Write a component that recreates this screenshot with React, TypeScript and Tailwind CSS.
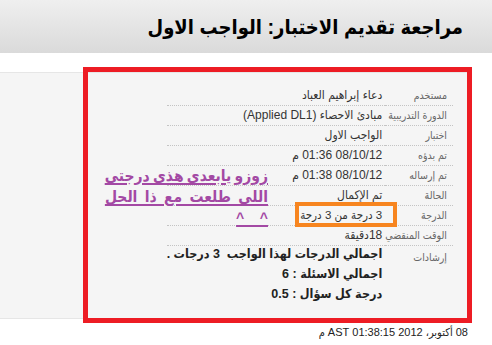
import React from "react";

const rows: [string, React.ReactNode][] = [
  ["مستخدم", "دعاء إبراهيم العباد"],
  ["الدورة التدريبية", "مبادئ الاحصاء (Applied DL1)"],
  ["اختبار", "الواجب الاول"],
  ["تم بدؤه", "08/10/12 01:36 م"],
  ["تم إرساله", "08/10/12 01:38 م"],
  ["الحالة", "تم الإكمال"],
  ["الدرجة", <span className="text-[11.5px]">3 درجة من 3 درجة</span>],
  ["الوقت المنقضي", "18دقيقة"],
];

export default function App() {
  const font = { fontFamily: '"Liberation Sans", "DejaVu Sans Condensed", "DejaVu Sans", sans-serif' };
  return (
    <div className="w-[492px] h-[345px] bg-white relative overflow-hidden" style={font}>
      <div className="h-[53px] bg-gradient-to-b from-[#efefef] to-[#dadada] flex items-center justify-end pr-[29px]">
        <h1 dir="rtl" className="text-[20px] font-bold text-black">مراجعة تقديم الاختبار: الواجب الاول</h1>
      </div>
      <div className="mt-[19px] w-[470px] h-[247px] bg-[#f5f5f5] border-y border-[#e6e6e6] flex justify-end pt-[12px] pr-[17px]">
        <table dir="rtl" className="w-[278px] h-fit border-collapse text-[#333]">
          <tbody>
            {rows.map(([k, v], i) => (
              <tr key={i} className="h-[20px] border-b border-dotted border-[#c4c4c4] leading-[16px]">
                <td className="w-[65px] p-0 pr-[6px] text-[10.5px] text-[#666] whitespace-nowrap align-middle">{k}</td>
                <td className="p-0 pr-[3px] text-[12px] whitespace-nowrap align-middle">{v}</td>
              </tr>
            ))}
            <tr>
              <td className="w-[65px] pr-[6px] pt-[4px] text-[10.5px] text-[#666] align-top whitespace-nowrap">إرشادات</td>
              <td className="pr-[3px] pt-0 text-[12.5px] font-bold text-[#222] leading-[20px] whitespace-nowrap align-top">
                <div className="-mt-[2px]">اجمالي الدرجات لهذا الواجب&nbsp; 3 درجات .</div>
                <div>اجمالي الاسئلة : 6</div>
                <div>درجة كل سؤال : 0.5</div>
              </td>
            </tr>
          </tbody>
        </table>
      </div>
      <div dir="rtl" className="pr-[24px] pt-[5px] text-[11px] text-[#222]">08 أكتوبر، 2012 01:38:15 AST م</div>

      {/* red highlight frame */}
      <div className="absolute left-[83px] top-[67px] w-[389px] h-[256px] border-[5px] border-[#ed1c24]" />
      {/* orange highlight on grade */}
      <div className="absolute left-[295px] top-[202px] w-[102px] h-[25px] border-[4px] border-[#f7851f]" />
      {/* purple note */}
      <div dir="rtl" className="absolute left-[100px] top-[165px] w-[168px] text-[15.5px] font-bold text-[#a349a4] leading-[21px] whitespace-nowrap underline decoration-2 underline-offset-2">
        <div className="[word-spacing:-1px]">زوزو يابعدى هذى درجتى</div>
        <div className="[word-spacing:3px]">اللى طلعت مع ذا الحل</div>
        <div className="text-[14px] pt-[1px]">^&nbsp;&nbsp;&nbsp;&nbsp;^</div>
      </div>
    </div>
  );
}
